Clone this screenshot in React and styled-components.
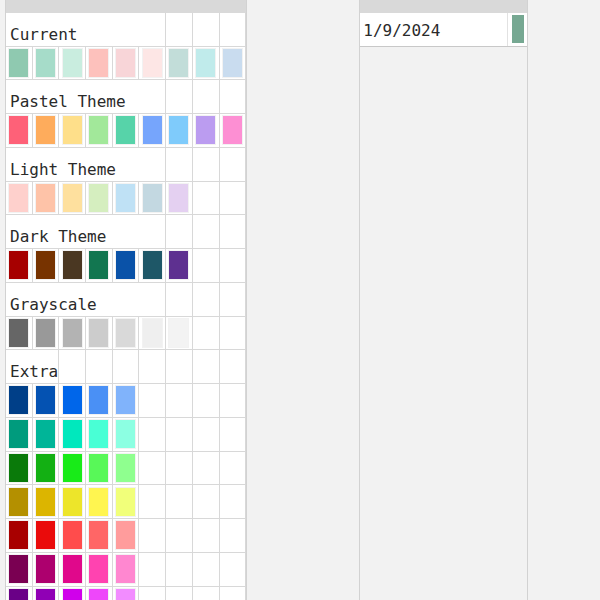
import React from 'react'
import styled, { createGlobalStyle } from 'styled-components'

const GlobalStyle = createGlobalStyle`
  html, body {
    margin: 0;
    padding: 0;
    background: #f2f2f2;
    overflow: hidden;
  }
  * { box-sizing: border-box; }
`

const sections = [
  { name: 'Current', span: 6, rows: [['#8fc9b0', '#a6dcc9', '#c9eddf', '#fdc1bc', '#f8d5d8', '#fde6e5', '#c2ddd9', '#c0ebeb', '#c9dcef']] },
  { name: 'Pastel Theme', span: 6, rows: [['#fe6178', '#feac5c', '#fedf8a', '#a2e89a', '#57d3a9', '#76a5fc', '#7fcbfb', '#bb9cf0', '#fd8fd3']] },
  { name: 'Light Theme', span: 6, rows: [['#fed0cc', '#fec3a8', '#fee09e', '#d5eebf', '#bfe1f5', '#c3d8e1', '#e4d0f1']] },
  { name: 'Dark Theme', span: 6, rows: [['#a60000', '#773300', '#4a3722', '#127650', '#0a52a8', '#1e5767', '#5e3090']] },
  { name: 'Grayscale', span: 6, rows: [['#666666', '#999999', '#b3b3b3', '#cccccc', '#d9d9d9', '#efefef', '#f3f3f3']] },
  {
    name: 'Extra',
    span: 2,
    rows: [
      ['#003f88', '#0452b2', '#0066ea', '#4a90f5', '#80b3fb'],
      ['#009b7d', '#00b598', '#00e8bd', '#49ffd5', '#8cffe2'],
      ['#0a7a0a', '#13b013', '#18eb18', '#58f858', '#8fff8f'],
      ['#b49000', '#dcb500', '#ede52a', '#fff550', '#f1ff7a'],
      ['#a80000', '#ea0b0b', '#ff4c4c', '#ff6666', '#ff9c9c'],
      ['#7a0052', '#ad006e', '#e0088b', '#ff43b0', '#ff87d0'],
      ['#6a0087', '#9000b5', '#d000eb', '#ee47fa', '#f28cff'],
    ],
  },
]

const COLS = 9

export default function App() {
  return (
    <>
      <GlobalStyle />
      <Page>
        <Sheet>
          <HeaderBar />
          <Grid>
            {sections.map((s) => (
              <React.Fragment key={s.name}>
                <Label $span={s.span}>{s.name}</Label>
                {Array.from({ length: COLS - s.span }).map((_, i) => (
                  <Cell key={'e' + i} />
                ))}
                {s.rows.map((row, r) =>
                  Array.from({ length: COLS }).map((_, i) => (
                    <Cell key={r + '-' + i}>
                      {row[i] && <Swatch $color={row[i]} />}
                    </Cell>
                  ))
                )}
              </React.Fragment>
            ))}
          </Grid>
        </Sheet>
        <SidePanel>
          <HeaderBar />
          <DateRow>
            <DateCell>1/9/2024</DateCell>
            <ChipCell>
              <Chip />
            </ChipCell>
          </DateRow>
        </SidePanel>
      </Page>
    </>
  )
}

const Page = styled.div`
  display: flex;
  align-items: stretch;
  min-height: 100vh;
  padding-left: 5px;
  font-family: "DejaVu Sans Mono", "Liberation Mono", monospace;
  color: #2a2a2a;
`

const Sheet = styled.div`
  width: 242.3px;
  border-left: 1px solid #d2d2d2;
  border-right: 1px solid #d2d2d2;
  background: #f2f2f2;
`

const HeaderBar = styled.div`
  height: 12.75px;
  background: #d9d9d9;
`

const Grid = styled.div`
  display: grid;
  grid-template-columns: repeat(9, 26.7px);
  grid-auto-rows: 33.75px;
  background: #fff;
`

const Cell = styled.div`
  border-right: 1px solid #d8d8d8;
  border-bottom: 1px solid #d8d8d8;
  display: flex;
  align-items: center;
  justify-content: center;
  background: #fff;
`

const Label = styled.div`
  grid-column: span ${(p) => p.$span};
  border-right: 1px solid #d8d8d8;
  border-bottom: 1px solid #d8d8d8;
  display: flex;
  align-items: flex-end;
  padding: 0 0 2px 4px;
  font-size: 16px;
  line-height: 18px;
  white-space: nowrap;
`

const Swatch = styled.div`
  width: 19px;
  height: 28px;
  background: ${(p) => p.$color};
  box-shadow: 0 0 0 1px rgba(0, 0, 0, 0.05);
`

const SidePanel = styled.div`
  margin-left: 112px;
  width: 169px;
  border-left: 1px solid #d2d2d2;
  border-right: 1px solid #d2d2d2;
  background: #f2f2f2;
`

const DateRow = styled.div`
  display: flex;
  height: 33.75px;
  border-bottom: 1px solid #c8c8c8;
`

const DateCell = styled.div`
  width: 148px;
  background: #fff;
  border-right: 1px solid #e2e2e2;
  display: flex;
  align-items: center;
  padding: 2px 0 0 3px;
  font-size: 16px;
`

const ChipCell = styled.div`
  flex: 1;
  background: #fff;
  display: flex;
  align-items: center;
  justify-content: center;
`

const Chip = styled.div`
  width: 12px;
  height: 28px;
  background: #76a892;
`
